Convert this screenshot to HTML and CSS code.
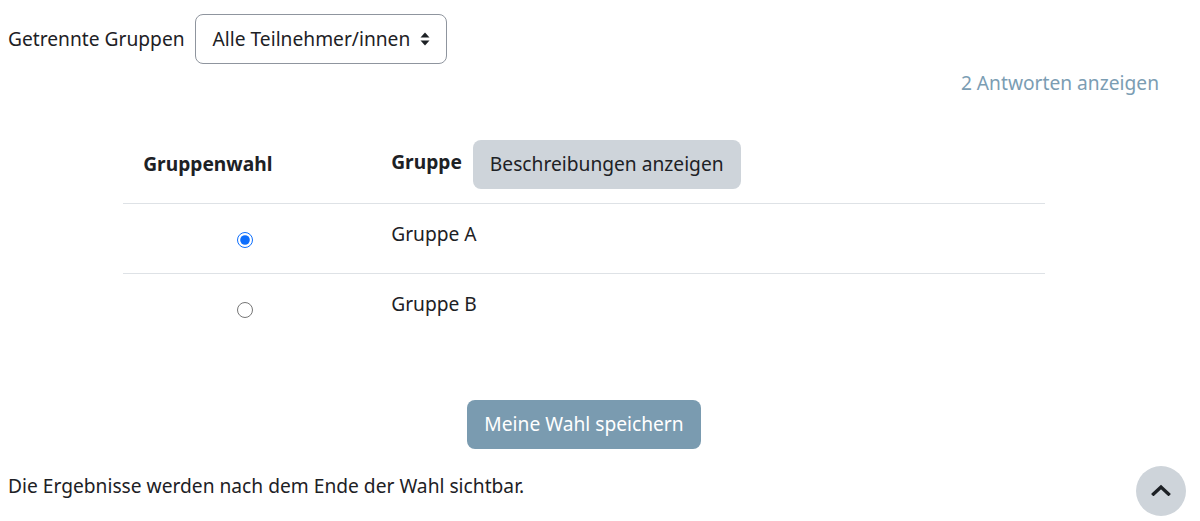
FILE: index.html
```html
<!DOCTYPE html>
<html lang="de">
<head>
<meta charset="utf-8">
<title>Gruppenwahl</title>
<link rel="stylesheet" href="styles.css">
</head>
<body>
<div class="page">
  <div class="group-selector">
    <label class="group-label" for="group">Getrennte Gruppen</label>
    <div class="select">
      <span class="select-value">Alle Teilnehmer/innen</span>
      <svg class="select-caret" width="10" height="14" viewBox="0 0 10 14"><path d="M5 0.5 L9.5 5.5 H0.5 Z" fill="#1d2125"/><path d="M5 13.5 L9.5 8.5 H0.5 Z" fill="#1d2125"/></svg>
    </div>
  </div>
  <div class="responses"><a class="responses-link" href="#">2 Antworten anzeigen</a></div>

  <table class="choices">
    <thead>
      <tr>
        <th class="col-choice">Gruppenwahl</th>
        <th class="col-group"><span class="th-group">Gruppe</span><button class="btn-secondary">Beschreibungen anzeigen</button></th>
      </tr>
    </thead>
    <tbody>
      <tr class="row-first">
        <td class="cell-radio"><input type="radio" name="g" checked></td>
        <td class="cell-name">Gruppe A</td>
      </tr>
      <tr>
        <td class="cell-radio"><input type="radio" name="g"></td>
        <td class="cell-name">Gruppe B</td>
      </tr>
    </tbody>
  </table>

  <div class="submit-row"><button class="btn-primary">Meine Wahl speichern</button></div>
  <p class="note">Die Ergebnisse werden nach dem Ende der Wahl sichtbar.</p>
</div>
<a class="back-to-top" href="#"><svg width="20" height="12" viewBox="0 0 20 12"><path d="M2.5 10 L10 3 L17.5 10" fill="none" stroke="#1d2125" stroke-width="3.4" stroke-linecap="square" stroke-linejoin="miter"/></svg></a>
</body>
</html>
```

FILE: styles.css
```css
html, body {
  margin: 0;
  padding: 0;
  background: #fff;
}
body {
  font-family: "Noto Sans", "Open Sans", sans-serif;
  font-size: 19.2px;
  line-height: 29.5px;
  color: #1d2125;
}
.page {
  margin-left: 8px;
  width: 1152px;
  padding-top: 14px;
}
.group-selector {
  display: flex;
  align-items: center;
  gap: 10px;
  height: 50px;
}
.select {
  box-sizing: border-box;
  display: flex;
  align-items: center;
  justify-content: space-between;
  width: 252px;
  height: 50px;
  padding: 0 16px 0 17px;
  border: 1px solid #8f959e;
  border-radius: 8px;
}
.select-caret {
  display: block;
}
.responses {
  margin-top: 4px;
  text-align: right;
  padding-right: 1px;
}
.responses-link {
  color: #7b9db3;
  text-decoration: none;
}
.choices {
  width: 80%;
  margin: 26px auto 0;
  border-collapse: collapse;
}
.choices th {
  text-align: left;
  font-weight: 700;
  padding: 16px 20px 14px;
  border-bottom: 1px solid #dee2e6;
  vertical-align: middle;
}
.col-choice {
  width: 204px;
}
.col-group {
  padding-left: 24px !important;
}
.th-group {
  margin-right: 11px;
}
.btn-secondary {
  font: inherit;
  font-weight: 400;
  color: #1d2125;
  background: #ced4da;
  border: 0;
  border-radius: 8px;
  height: 49px;
  padding: 0 17px;
  vertical-align: middle;
}
.choices td {
  padding: 15px 20px 25px 24px;
  vertical-align: top;
}
.row-first td {
  border-bottom: 1px solid #dee2e6;
}
.cell-radio {
  text-align: center;
  padding-left: 20px !important;
}
.cell-radio input {
  display: block;
  width: 16px;
  height: 16px;
  margin: 13px auto 0;
  accent-color: #0d6efd;
}
.submit-row {
  margin-top: 56px;
  text-align: center;
}
.btn-primary {
  font: inherit;
  color: #fff;
  background: #7a9bb0;
  border: 0;
  border-radius: 8px;
  height: 49px;
  padding: 0 17px;
}
.note {
  margin: 22px 0 0;
}
.back-to-top {
  position: fixed;
  left: 1136px;
  top: 466px;
  width: 50px;
  height: 50px;
  border-radius: 50%;
  background: #ced4da;
  display: flex;
  align-items: center;
  justify-content: center;
}
.back-to-top svg {
  display: block;
  margin-top: -3px;
}
```
